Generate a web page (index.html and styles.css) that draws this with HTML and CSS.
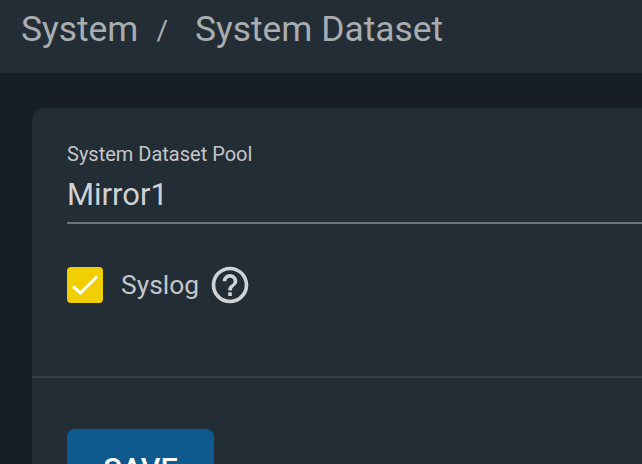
FILE: index.html
```html
<!DOCTYPE html>
<html lang="en">
<head>
  <meta charset="UTF-8" />
  <title>System Dataset</title>
  <link rel="stylesheet" href="styles.css">
</head>
<body>
  <div class="page-title">
    <span class="crumb">System</span>
    <span class="crumb-sep">/</span>
    <span class="crumb">System Dataset</span>
  </div>

  <div class="content">
    <div class="card">
      <div class="card-body">
        <div class="field">
          <div class="field-label">System Dataset Pool</div>
          <div class="field-value">Mirror1</div>
        </div>
        <div class="check-row">
          <span class="check-box">
            <svg width="36" height="36" viewBox="0 0 36 36">
              <path d="M6 19.5 L13.500 26 L30 9.500" fill="none" stroke="#ffffff" stroke-width="3"/>
            </svg>
          </span>
          <span class="check-label">Syslog</span>
          <svg class="help-icon" width="44" height="44" viewBox="0 0 24 24">
            <path fill="#cfd2d4" d="M11 18h2v-2h-2v2zm1-16C6.48 2 2 6.480 2 12s4.480 10 10 10 10-4.480 10-10S17.520 2 12 2zm0 18c-4.410 0-8-3.590-8-8s3.590-8 8-8 8 3.590 8 8-3.590 8-8 8zm0-14c-2.210 0-4 1.790-4 4h2c0-1.100.9-2 2-2s2 .9 2 2c0 2-3 1.750-3 5h2c0-2.250 3-2.500 3-5 0-2.210-1.790-4-4-4z"/>
          </svg>
        </div>
      </div>
      <div class="card-actions">
        <button class="save-button">SAVE</button>
      </div>
    </div>
  </div>
</body>
</html>
```

FILE: styles.css
```css
html, body {
  height: 100%;
}

body {
  margin: 0;
  overflow: hidden;
  background-color: #171e26;
  color: #cfd2d4;
  font-family: Roboto, sans-serif;
}

/* Top title bar */
.page-title {
  height: 73px;
  box-sizing: border-box;
  padding: 8px 0 0 21px;
  display: flex;
  align-items: flex-start;
  background-color: #232d35;
  color: #a9adb0;
  font-size: 35.4px;
  line-height: 42px;
  white-space: nowrap;
}

.crumb-sep {
  margin: 2px 27px 0 18px;
  font-size: 28px;
}

.content {
  padding: 35px 0 0 32px;
}

.card {
  width: 640px;
  height: 400px;
  background-color: #232d35;
  border-radius: 12px 0 0 0;
}

.card-body {
  height: 270px;
  box-sizing: border-box;
  padding: 33px 0 0 35px;
  border-bottom: 2px solid #38424a;
}

.field {
  border-bottom: 2px solid #6d7378;
  height: 83px;
  box-sizing: border-box;
}

.field-label {
  font-size: 20px;
  line-height: 26px;
  color: #c3c6c9;
}

.field-value {
  font-size: 31px;
  line-height: 38px;
  margin-top: 9px;
  color: #cfd2d4;
}

.check-row {
  display: flex;
  align-items: center;
  height: 44px;
  margin-top: 39px;
}

.check-box {
  width: 36px;
  height: 36px;
  background-color: #f0ce00;
  border-radius: 4px;
  display: flex;
}

.check-label {
  margin-left: 18px;
  font-size: 26.4px;
  line-height: 36px;
  color: #c3c6c9;
}

.help-icon {
  margin-left: 9px;
}

.card-actions {
  padding: 51px 0 0 35px;
}

.save-button {
  width: 147px;
  height: 60px;
  padding: 20px 0 0;
  border: none;
  border-radius: 8px;
  background-color: #0e5a8e;
  color: #ffffff;
  font-family: Roboto, sans-serif;
  font-size: 30.5px;
  font-weight: 500;
}
```
